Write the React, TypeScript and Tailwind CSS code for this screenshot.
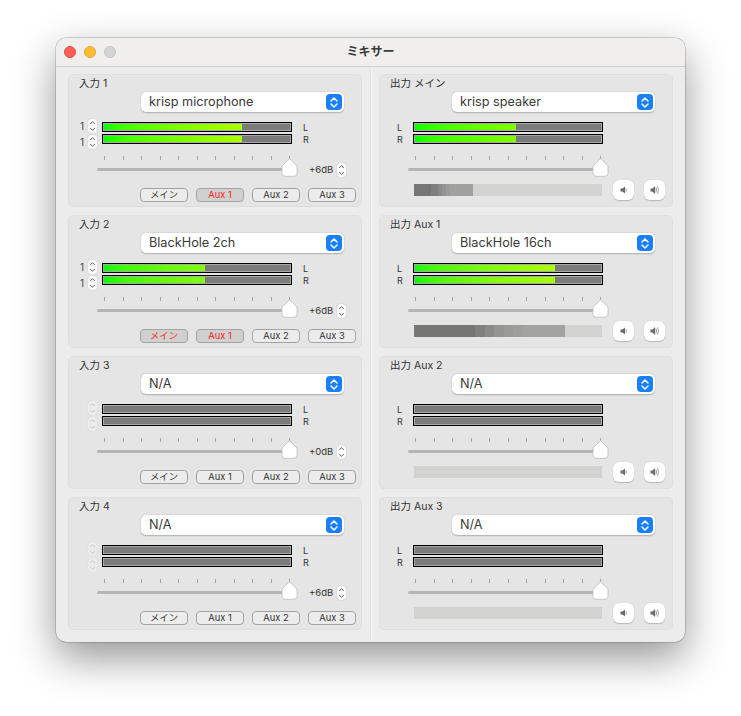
import type { ReactNode } from "react";

interface Segment {
  width: number;
  color: string;
}

interface Channel {
  title: string;
  device: string;
  gain?: string;
  fill?: number;
  fillClass?: string;
  showNumbers?: boolean;
  active?: string[];
  segments?: Segment[];
}

const inputs: Channel[] = [
  {
    title: "入力 1",
    device: "krisp microphone",
    gain: "+6dB",
    fill: 138,
    fillClass: "bg-gradient-to-r from-[#00ff00] to-[#abff00]",
    showNumbers: true,
    active: ["Aux 1"],
  },
  {
    title: "入力 2",
    device: "BlackHole 2ch",
    gain: "+6dB",
    fill: 101,
    fillClass: "bg-gradient-to-r from-[#00ff00] to-[#80ff00]",
    showNumbers: true,
    active: ["メイン", "Aux 1"],
  },
  { title: "入力 3", device: "N/A", gain: "+0dB" },
  { title: "入力 4", device: "N/A", gain: "+6dB" },
];

const outputs: Channel[] = [
  {
    title: "出力 メイン",
    device: "krisp speaker",
    fill: 101,
    fillClass: "bg-gradient-to-r from-[#00ff00] to-[#80ff00]",
    segments: [
      { width: 17, color: "#757575" },
      { width: 7, color: "#7f7f7f" },
      { width: 4, color: "#8a8a8a" },
      { width: 4, color: "#939393" },
      { width: 4, color: "#9b9b9b" },
      { width: 23, color: "#a0a09e" },
    ],
  },
  {
    title: "出力 Aux 1",
    device: "BlackHole 16ch",
    fill: 140,
    fillClass: "bg-gradient-to-r from-[#00ff00] to-[#abff00]",
    segments: [
      { width: 61, color: "#767674" },
      { width: 10, color: "#80807e" },
      { width: 9, color: "#8a8a88" },
      { width: 10, color: "#949492" },
      { width: 9, color: "#9a9a98" },
      { width: 10, color: "#9e9e9c" },
      { width: 42, color: "#a2a2a0" },
    ],
  },
  { title: "出力 Aux 2", device: "N/A" },
  { title: "出力 Aux 3", device: "N/A" },
];

const sends = ["メイン", "Aux 1", "Aux 2", "Aux 3"];
const ticks = Array.from({ length: 11 }, (_, i) => i);

function Stepper({ disabled }: { disabled?: boolean }) {
  return (
    <div
      className={`flex h-[14px] w-[9px] items-center justify-center rounded-[3px] ${
        disabled ? "bg-[#ebebeb] shadow-[0_0_1px_rgba(0,0,0,0.12)]" : "bg-[#fbfbfb] shadow-[0_0_1px_rgba(0,0,0,0.3)]"
      }`}
    >
      <svg width="7" height="12" viewBox="0 0 7 12" fill="none">
        <path
          d="M1.2 4 L3.5 1.6 L5.8 4 M1.2 8 L3.5 10.4 L5.8 8"
          stroke={disabled ? "#c6c6c6" : "#666"}
          strokeWidth="1"
        />
      </svg>
    </div>
  );
}

function DeviceSelect({ label }: { label: string }) {
  return (
    <div className="flex h-[20px] w-[203px] items-center justify-between rounded-[5px] bg-white pl-[8px] pr-[2px] shadow-[0_0.5px_1.5px_rgba(0,0,0,0.25)]">
      <span className="text-[12.7px] leading-none text-[#3a3a3a]">{label}</span>
      <div className="flex h-[16px] w-[16px] items-center justify-center rounded-[4px] bg-[#1a7ffb]">
        <svg width="10" height="13" viewBox="0 0 10 13" fill="none">
          <path
            d="M2 5 L5 2 L8 5 M2 8 L5 11 L8 8"
            stroke="white"
            strokeWidth="1.5"
            strokeLinecap="round"
            strokeLinejoin="round"
          />
        </svg>
      </div>
    </div>
  );
}

function Meter({ fill, fillClass }: { fill?: number; fillClass?: string }) {
  return (
    <div className="h-[10px] w-[190px] border border-black bg-[#a8a8a8] p-px">
      <div className="h-full w-full bg-[#7b7b7b]">
        {fill ? <div className={`h-full ${fillClass}`} style={{ width: fill }} /> : null}
      </div>
    </div>
  );
}

function Fader() {
  return (
    <div className="relative h-[21px] w-[193px]">
      <div className="ml-[7px] flex w-[186px] justify-between">
        {ticks.map((t) => (
          <div key={t} className="h-[4px] w-px bg-[#a3a3a3]" />
        ))}
      </div>
      <div className="mt-[8px] h-[3px] w-full rounded-full bg-[#b5b5b5]" />
      <svg className="absolute left-[184px] top-[2px]" width="17" height="19" viewBox="0 0 17 19">
        <path
          d="M8.5 0.7 L16 8 V15.5 Q16 18.3 13 18.3 H4 Q1 18.3 1 15.5 V8 Z"
          fill="white"
          stroke="#bdbdbd"
          strokeWidth="0.8"
        />
      </svg>
    </div>
  );
}

function SpeakerButton({ children }: { children: ReactNode }) {
  return (
    <div className="flex h-[20px] w-[21px] items-center justify-center rounded-[6px] bg-white shadow-[0_0.5px_1px_rgba(0,0,0,0.2)]">
      {children}
    </div>
  );
}

function Panel({ title, children }: { title: string; children: ReactNode }) {
  return (
    <div className="flex h-[133px] flex-col rounded-[5px] border border-[#dfdfdf] bg-[#e5e5e5]">
      <div className="h-[17px] pl-[10px] pt-[2px] text-[10.5px] leading-[13px] text-[#333]">{title}</div>
      {children}
    </div>
  );
}

function InputPanel({ channel }: { channel: Channel }) {
  const live = channel.showNumbers;
  return (
    <Panel title={channel.title}>
      <div className="pl-[72px]">
        <DeviceSelect label={channel.device} />
      </div>
      <div className="mt-[10px] flex h-[22px]">
        {/* ステッパーはメーターより間隔が広い */}
        <div className="mt-[-3px] flex w-[33px] flex-col gap-[2px]">
          {["L", "R"].map((side) => (
            <div key={side} className="flex h-[14px] items-center">
              <span className="w-[19px] pl-[11px] text-[10px] leading-none text-[#444]">{live ? "1" : ""}</span>
              <Stepper disabled={!live} />
            </div>
          ))}
        </div>
        <div className="flex flex-col gap-[2px]">
          <Meter fill={channel.fill} fillClass={channel.fillClass} />
          <Meter fill={channel.fill} fillClass={channel.fillClass} />
        </div>
        <div className="ml-[11px] flex flex-col gap-[3px] pt-[1px] text-[9px] leading-[9px] text-[#333]">
          <span>L</span>
          <span>R</span>
        </div>
      </div>
      <div className="mt-[12px] flex items-start pl-[28px]">
        <Fader />
        <div className="ml-[19px] mt-[7px] flex items-center gap-[4px]">
          <span className="w-[24px] whitespace-nowrap text-[9.5px] leading-none text-[#333]">{channel.gain}</span>
          <Stepper />
        </div>
      </div>
      <div className="mt-[11px] flex gap-[8px] pl-[71px]">
        {sends.map((send) => {
          const on = channel.active?.includes(send);
          return (
            <div
              key={send}
              className={`flex h-[14px] w-[48px] items-center justify-center rounded-[4px] border border-[#a3a3a3] pb-px text-[9.3px] leading-none ${
                on ? "bg-[#d0d0ce] text-[#fa1c1c]" : "bg-[#ececec] text-[#333]"
              }`}
            >
              {send}
            </div>
          );
        })}
      </div>
    </Panel>
  );
}

function OutputPanel({ channel }: { channel: Channel }) {
  return (
    <Panel title={channel.title}>
      <div className="pl-[72px]">
        <DeviceSelect label={channel.device} />
      </div>
      <div className="mt-[10px] flex h-[22px]">
        <div className="flex w-[33px] flex-col gap-[3px] pl-[17px] pt-[1px] text-[9px] leading-[9px] text-[#333]">
          <span>L</span>
          <span>R</span>
        </div>
        <div className="flex flex-col gap-[2px]">
          <Meter fill={channel.fill} fillClass={channel.fillClass} />
          <Meter fill={channel.fill} fillClass={channel.fillClass} />
        </div>
      </div>
      <div className="mt-[12px] pl-[28px]">
        <Fader />
      </div>
      <div className="mt-[3px] flex items-center pl-[34px]">
        <div className="flex h-[12px] w-[188px] bg-[#d2d2d0]">
          {channel.segments?.map((seg, i) => (
            <div key={i} className="h-full" style={{ width: seg.width, backgroundColor: seg.color }} />
          ))}
        </div>
        <div className="ml-[11px] flex gap-[10px]">
          <SpeakerButton>
            <svg width="8" height="8" viewBox="0 0 8 8">
              <path d="M0.5 2.5 H2.5 L5 0.5 V7.5 L2.5 5.5 H0.5 Z" fill="#6a6a6a" />
              <path d="M5.8 2.3 Q7 4 5.8 5.7" stroke="#b0b0b0" strokeWidth="1.2" fill="none" />
            </svg>
          </SpeakerButton>
          <SpeakerButton>
            <svg width="10" height="10" viewBox="0 0 10 10">
              <path d="M0.5 3.5 H2.5 L5 1 V9 L2.5 6.5 H0.5 Z" fill="#6a6a6a" />
              <path d="M5.8 2.5 Q7.2 5 5.8 7.5" stroke="#a0a0a0" strokeWidth="1.2" fill="none" />
              <path d="M7.4 1.2 Q9.4 5 7.4 8.8" stroke="#b8b8b8" strokeWidth="1.2" fill="none" />
            </svg>
          </SpeakerButton>
        </div>
      </div>
    </Panel>
  );
}

export default function App() {
  return (
    <div className="h-[716px] w-[741px] overflow-hidden bg-white pl-[56px] pt-[38px] font-['Inter','Noto_Sans_CJK_JP',sans-serif]">
      <div className="h-[604px] w-[629px] overflow-hidden rounded-[10px] bg-[#ececec] shadow-[0_0_0_0.5px_rgba(0,0,0,0.3),0_16px_42px_rgba(0,0,0,0.42)]">
        {/* タイトルバー */}
        <div className="relative flex h-[29px] items-center justify-center border-b border-[#cfcfcf] bg-[#f0efee]">
          <div className="absolute left-[8px] top-[8px] flex gap-[8px]">
            <div className="h-[12px] w-[12px] rounded-full border border-[#e24b41] bg-[#ff5f57]" />
            <div className="h-[12px] w-[12px] rounded-full border border-[#e1a73e] bg-[#febc2e]" />
            <div className="h-[12px] w-[12px] rounded-full border border-[#c4c4c4] bg-[#d4d4d4]" />
          </div>
          <span className="text-[12px] font-bold leading-none text-[#3a3a3a]">ミキサー</span>
        </div>
        <div className="flex h-[575px] pl-[12px]">
          <div className="flex w-[294px] flex-col gap-[8px] pt-[7px]">
            {inputs.map((input) => (
              <InputPanel key={input.title} channel={input} />
            ))}
          </div>
          {/* 左右の区切り線 */}
          <div className="ml-[8px] w-px bg-[#e3e3e3]" />
          <div className="w-px bg-[#f4f4f4]" />
          <div className="ml-[7px] flex w-[294px] flex-col gap-[8px] pt-[7px]">
            {outputs.map((output) => (
              <OutputPanel key={output.title} channel={output} />
            ))}
          </div>
        </div>
      </div>
    </div>
  );
}
